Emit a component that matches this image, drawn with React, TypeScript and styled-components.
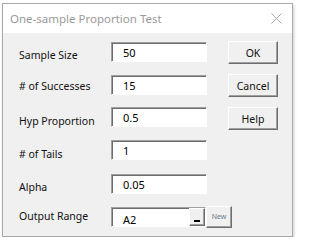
import React from "react";
import styled, { createGlobalStyle } from "styled-components";

const GlobalStyle = createGlobalStyle`
  html, body {
    margin: 0;
    padding: 0;
    background: #ffffff;
  }
  body {
    font-family: "Noto Sans", "Liberation Sans", sans-serif;
  }
`;

const Window = styled.div`
  margin: 3px 0 0 2px;
  width: 291px;
  height: 234px;
  box-sizing: border-box;
  border: 1px solid #aaaaaa;
  background: #f0f0f0;
  display: flex;
  flex-direction: column;
  box-shadow: 1px 2px 3px rgba(0, 0, 0, 0.2);
`;

const TitleBar = styled.div`
  height: 29px;
  background: #ffffff;
  display: flex;
  align-items: center;
  justify-content: space-between;
  padding: 0 10px 0 7px;
`;

const Title = styled.div`
  font-size: 11.5px;
  color: #9a9a9a;
  padding-bottom: 1px;
`;

const Body = styled.div`
  display: flex;
  padding: 8px 0 0 16px;
`;

const Form = styled.div`
  margin-top: 1px;
  display: grid;
  grid-template-columns: 92px 96px;
  row-gap: 12.5px;
  align-items: start;
`;

const Label = styled.div<{ drop: number }>`
  font-size: 10.5px;
  line-height: 13px;
  color: #111111;
  padding-top: ${(p) => p.drop}px;
  white-space: nowrap;
`;

const sunken = `
  box-sizing: border-box;
  height: 20px;
  background: #ffffff;
  border-style: solid;
  border-width: 1px;
  border-color: #a0a0a0 #ffffff #ffffff #a0a0a0;
  box-shadow: inset 1px 1px 0 #6d6d6d;
`;

const Field = styled.div<{ drop?: number }>`
  ${sunken}
  width: 96px;
  padding: ${(p) => p.drop ?? 3}px 0 0 11px;
  font-size: 11px;
  line-height: 13px;
  color: #000000;
`;

const RangeCell = styled.div`
  display: flex;
  width: max-content;
  align-items: flex-start;
`;

const RangeField = styled.div`
  ${sunken}
  width: 95px;
  display: flex;
  align-items: flex-start;
`;

const RangeText = styled.div`
  flex: 1;
  padding: 5px 0 0 11px;
  font-size: 11px;
  line-height: 13px;
  color: #000000;
`;

const raised = `
  box-sizing: border-box;
  background: #f0f0f0;
  border-style: solid;
  border-width: 1px;
  border-color: #ffffff #6d6d6d #6d6d6d #ffffff;
  box-shadow: inset -1px -1px 0 #a0a0a0;
  display: flex;
  align-items: center;
  justify-content: center;
`;

const PickButton = styled.div`
  ${raised}
  width: 16px;
  height: 18px;
  align-items: flex-end;
  padding-bottom: 3px;
`;

const PickGlyph = styled.div`
  width: 6px;
  height: 2px;
  background: #000000;
`;

const NewButton = styled.div`
  ${raised}
  width: 26px;
  height: 22px;
  margin-top: -1px;
  font-size: 7px;
  color: #6b7a8a;
`;

const ButtonColumn = styled.div`
  margin-left: 21px;
  display: flex;
  flex-direction: column;
  gap: 10px;
`;

const DialogButton = styled.div`
  ${raised}
  width: 50px;
  height: 23px;
  font-size: 10.5px;
  color: #111111;
`;

const CloseIcon = () => (
  <svg width="11" height="11" viewBox="0 0 11 11">
    <path d="M0.5 0.5 L10.5 10.5 M10.5 0.5 L0.5 10.5" stroke="#a8a8a8" strokeWidth="1" />
  </svg>
);

const rows = [
  { label: "Sample Size", value: "50", drop: 7 },
  { label: "# of Successes", value: "15", drop: 5 },
  { label: "Hyp Proportion", value: "0.5", drop: 7.7 },
  { label: "# of Tails", value: "1", drop: 8 },
  { label: "Alpha", value: "0.05", drop: 7.7 },
];

export default function App() {
  return (
    <>
      <GlobalStyle />
      <Window>
        <TitleBar>
          <Title>One-sample Proportion Test</Title>
          <CloseIcon />
        </TitleBar>
        <Body>
          <Form>
            {rows.map((r) => (
              <React.Fragment key={r.label}>
                <Label drop={r.drop}>{r.label}</Label>
                <Field>{r.value}</Field>
              </React.Fragment>
            ))}
            <Label drop={3}>Output Range</Label>
            <RangeCell>
              <RangeField>
                <RangeText>A2</RangeText>
                <PickButton>
                  <PickGlyph />
                </PickButton>
              </RangeField>
              <NewButton>New</NewButton>
            </RangeCell>
          </Form>
          <ButtonColumn>
            <DialogButton>OK</DialogButton>
            <DialogButton>Cancel</DialogButton>
            <DialogButton>Help</DialogButton>
          </ButtonColumn>
        </Body>
      </Window>
    </>
  );
}
